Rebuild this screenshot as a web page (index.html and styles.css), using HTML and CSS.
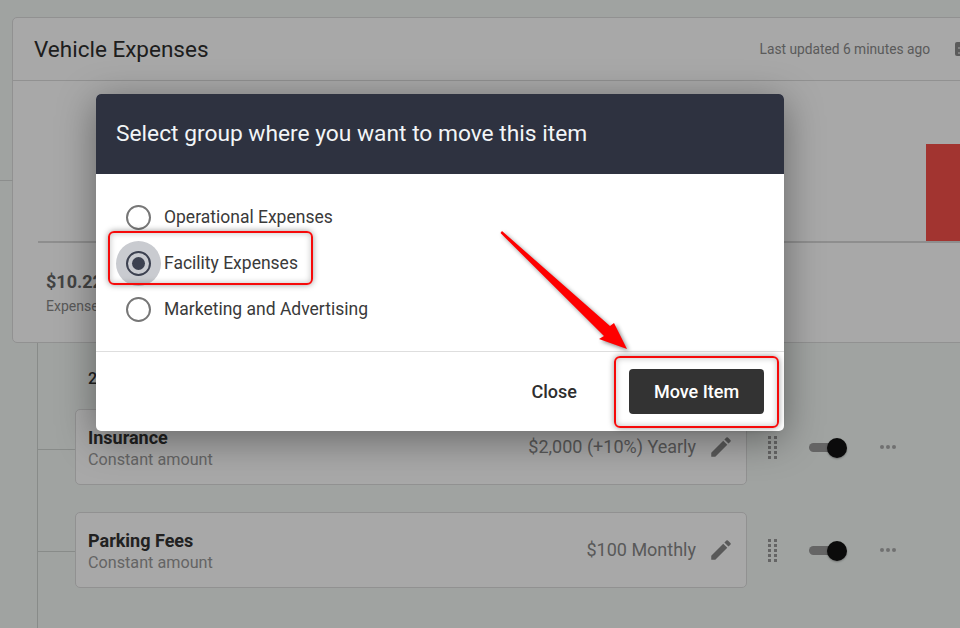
FILE: index.html
```html
<!DOCTYPE html>
<html lang="en">
  <head>
    <meta charset="UTF-8" />
    <meta name="viewport" content="width=device-width, initial-scale=1.0" />
    <title>Vehicle Expenses</title>
    <link rel="stylesheet" href="styles.css">
  </head>
  <body>
    <div class="page">
      <div class="side-rule"></div>

      <!-- expense card -->
      <section class="card">
        <header class="card-header">
          <h1>Vehicle Expenses</h1>
          <div class="card-meta">
            <span>Last updated 6 minutes ago</span>
            <span class="meta-icon"></span>
          </div>
        </header>
        <div class="chart">
          <div class="chart-bar"></div>
        </div>
        <div class="summary">
          <strong>$10.22</strong>
          <span>Expenses</span>
        </div>
      </section>

      <!-- item tree -->
      <div class="tree">
        <p class="tree-count">2 items</p>

        <div class="row">
          <div class="item">
            <div class="item-text">
              <h2>Insurance</h2>
              <p>Constant amount</p>
            </div>
            <span class="item-amount">$2,000 (+10%) Yearly</span>
            <svg class="pencil" viewBox="0 0 24 24"><path d="M3 17.25V21h3.75L17.81 9.94l-3.75-3.75L3 17.25zM20.71 7.04a1 1 0 0 0 0-1.41l-2.34-2.34a1 1 0 0 0-1.41 0l-1.83 1.83 3.75 3.75 1.83-1.83z"/></svg>
          </div>
          <div class="drag"><i></i><i></i><i></i><i></i><i></i><i></i><i></i><i></i><i></i><i></i></div>
          <div class="toggle"><span></span></div>
          <div class="more"><i></i><i></i><i></i></div>
        </div>

        <div class="row">
          <div class="item">
            <div class="item-text">
              <h2>Parking Fees</h2>
              <p>Constant amount</p>
            </div>
            <span class="item-amount">$100 Monthly</span>
            <svg class="pencil" viewBox="0 0 24 24"><path d="M3 17.25V21h3.75L17.81 9.94l-3.75-3.75L3 17.25zM20.71 7.04a1 1 0 0 0 0-1.41l-2.34-2.34a1 1 0 0 0-1.41 0l-1.83 1.83 3.75 3.75 1.83-1.83z"/></svg>
          </div>
          <div class="drag"><i></i><i></i><i></i><i></i><i></i><i></i><i></i><i></i><i></i><i></i></div>
          <div class="toggle"><span></span></div>
          <div class="more"><i></i><i></i><i></i></div>
        </div>
      </div>

      <div class="backdrop"></div>

      <!-- move dialog -->
      <div class="modal">
        <div class="modal-title">Select group where you want to move this item</div>
        <div class="modal-body">
          <label class="radio"><span class="radio-mark"></span>Operational Expenses</label>
          <label class="radio radio-on"><span class="radio-mark"></span>Facility Expenses</label>
          <label class="radio"><span class="radio-mark"></span>Marketing and Advertising</label>
        </div>
        <div class="modal-footer">
          <button class="btn-close">Close</button>
          <button class="btn-move">Move Item</button>
        </div>
      </div>

      <!-- screenshot annotations -->
      <div class="mark mark-radio"></div>
      <div class="mark mark-button"></div>
      <svg class="arrow" viewBox="0 0 960 628">
        <polygon points="502,231 610,326 614,323 627,349 599,339 604,336 500.5,233"/>
      </svg>
    </div>
  </body>
</html>
```

FILE: styles.css
```css
* {
  box-sizing: border-box;
}

body {
  margin: 0;
  font-family: Roboto, "Liberation Sans", sans-serif;
}

.page {
  position: relative;
  width: 960px;
  height: 628px;
  overflow: hidden;
  background: #f3f8f5;
  padding: 17px 0 0 12px;
}

.side-rule {
  position: absolute;
  left: 0;
  top: 180px;
  width: 13px;
  height: 1px;
  background: #d5d8d6;
}

.card {
  width: 1100px;
  height: 326px;
  background: #ffffff;
  border: 1px solid #dcdcdc;
  border-radius: 5px;
}

.card-header {
  display: flex;
  align-items: center;
  height: 63px;
  width: 960px;
  padding: 0 0 0 21px;
  border-bottom: 1px solid #dcdcdc;
}

.card-header h1 {
  margin: 0;
  flex: 1;
  font-size: 22.5px;
  font-weight: 400;
  color: #2e2e2e;
}

.card-meta {
  display: flex;
  align-items: center;
  gap: 25px;
  font-size: 13.75px;
  color: #8a8a8a;
}

.meta-icon {
  width: 14px;
  height: 14px;
  margin-right: 4px;
  background: repeating-linear-gradient(#8a8a8a 0 3px, #c4c4c4 3px 5px) no-repeat 3px 2px / 3px 10px, #8a8a8a;
  border-radius: 2px;
}

.chart {
  position: relative;
  height: 162px;
  margin-left: 25px;
  border-bottom: 2px solid #d8d8d8;
}

.chart-bar {
  position: absolute;
  left: 888px;
  top: 63px;
  width: 120px;
  height: 97px;
  background: #f6504a;
}

.summary {
  display: flex;
  flex-direction: column;
  padding: 28px 0 0 33px;
}

.summary strong {
  font-size: 18px;
  font-weight: 700;
  color: #666;
}

.summary span {
  margin-top: 6px;
  font-size: 14px;
  color: #888;
}

.tree {
  height: 300px;
  margin-left: 25px;
  padding: 26px 0 0 37px;
  border-left: 1px solid #cfd3d1;
}

.tree-count {
  margin: 0 0 21px 13px;
  font-size: 16px;
  font-weight: 500;
  color: #333;
}

.row {
  position: relative;
  display: flex;
  align-items: center;
  margin-bottom: 27px;
}

.row::before {
  content: "";
  position: absolute;
  left: -37px;
  top: 40px;
  width: 37px;
  height: 1px;
  background: #cfd3d1;
}

.row:last-child::before {
  top: 39px;
}

.item {
  display: flex;
  align-items: center;
  width: 672px;
  height: 76px;
  padding: 0 12px;
  background: #ffffff;
  border: 1px solid #dcdcdc;
  border-radius: 5px;
}

.item-text {
  flex: 1;
  padding-top: 1px;
}

.item-text h2 {
  margin: 0;
  font-size: 18px;
  font-weight: 700;
  color: #333;
}

.item-text p {
  margin: 2px 0 0;
  font-size: 16.2px;
  color: #999;
}

.item-amount {
  margin-bottom: 2px;
  font-size: 18px;
  color: #888;
}

.pencil {
  width: 26px;
  height: 26px;
  margin-left: 12px;
  fill: #888;
}

.drag {
  display: grid;
  grid-template-columns: repeat(2, 3px);
  gap: 2px 3px;
  margin-left: 21px;
}

.drag i {
  width: 3px;
  height: 3px;
  background: #999;
}

.toggle {
  position: relative;
  width: 28px;
  height: 9px;
  margin: 1px 0 0 32px;
  background: #999;
  border-radius: 5px;
}

.toggle span {
  position: absolute;
  left: 18px;
  top: -5.5px;
  width: 20px;
  height: 20px;
  background: #111;
  border-radius: 50%;
  box-shadow: 0 1px 2px rgba(0, 0, 0, 0.3);
}

.more {
  display: flex;
  gap: 2px;
  margin-left: 43px;
}

.more i {
  width: 4px;
  height: 4px;
  background: #aaa;
  border-radius: 50%;
}

.backdrop {
  position: absolute;
  inset: 0;
  background: rgba(0, 0, 0, 0.34);
}

.modal {
  position: absolute;
  z-index: 0;
  left: 96px;
  top: 94px;
  width: 688px;
  height: 337px;
  background: #ffffff;
  border-radius: 5px;
  box-shadow: 0 8px 38px rgba(0, 0, 0, 0.4);
  overflow: hidden;
}

.modal-title {
  display: flex;
  align-items: center;
  height: 80px;
  padding: 0 0 2px 20px;
  background: #2e3240;
  color: #f2f5f7;
  font-size: 22.75px;
}

.modal-body {
  display: flex;
  flex-direction: column;
  gap: 10px;
  height: 178px;
  padding: 25px 0 0 30px;
  border-bottom: 1px solid #dedede;
}

.radio {
  display: flex;
  align-items: center;
  gap: 13px;
  height: 36px;
  font-size: 17.5px;
  color: #3a3a3a;
}

.radio-mark {
  position: relative;
  width: 25px;
  height: 25px;
  border: 2px solid #777;
  border-radius: 50%;
}

.radio-on .radio-mark {
  border-color: #3c4150;
}

.radio-on .radio-mark::before {
  content: "";
  position: absolute;
  left: -12px;
  top: -12px;
  width: 45px;
  height: 45px;
  background: #c9cbd0;
  border-radius: 50%;
  z-index: -1;
}

.radio-on .radio-mark::after {
  content: "";
  position: absolute;
  left: 4px;
  top: 4px;
  width: 13px;
  height: 13px;
  background: #3c4150;
  border-radius: 50%;
}

.modal-footer {
  display: flex;
  align-items: center;
  justify-content: flex-end;
  gap: 52px;
  height: 79px;
  padding-right: 20px;
}

.btn-close,
.btn-move {
  border: none;
  font-family: inherit;
  font-size: 18px;
  font-weight: 500;
  cursor: pointer;
}

.btn-close {
  padding: 0;
  background: none;
  color: #2e2e2e;
}

.btn-move {
  width: 135px;
  height: 45px;
  background: #333333;
  color: #ffffff;
  border-radius: 4px;
}

.mark {
  position: absolute;
  border: 2px solid #f60a0a;
  border-radius: 6px;
  box-shadow: 0 0 6px rgba(0, 0, 0, 0.4), inset 0 0 6px rgba(0, 0, 0, 0.25);
}

.mark-radio {
  left: 108px;
  top: 231px;
  width: 205px;
  height: 54px;
}

.mark-button {
  left: 614px;
  top: 356px;
  width: 165px;
  height: 72px;
}

.arrow {
  position: absolute;
  left: 0;
  top: 0;
  width: 960px;
  height: 628px;
  fill: #fe0000;
  filter: drop-shadow(2px 2px 2px rgba(0, 0, 0, 0.45));
}
```
